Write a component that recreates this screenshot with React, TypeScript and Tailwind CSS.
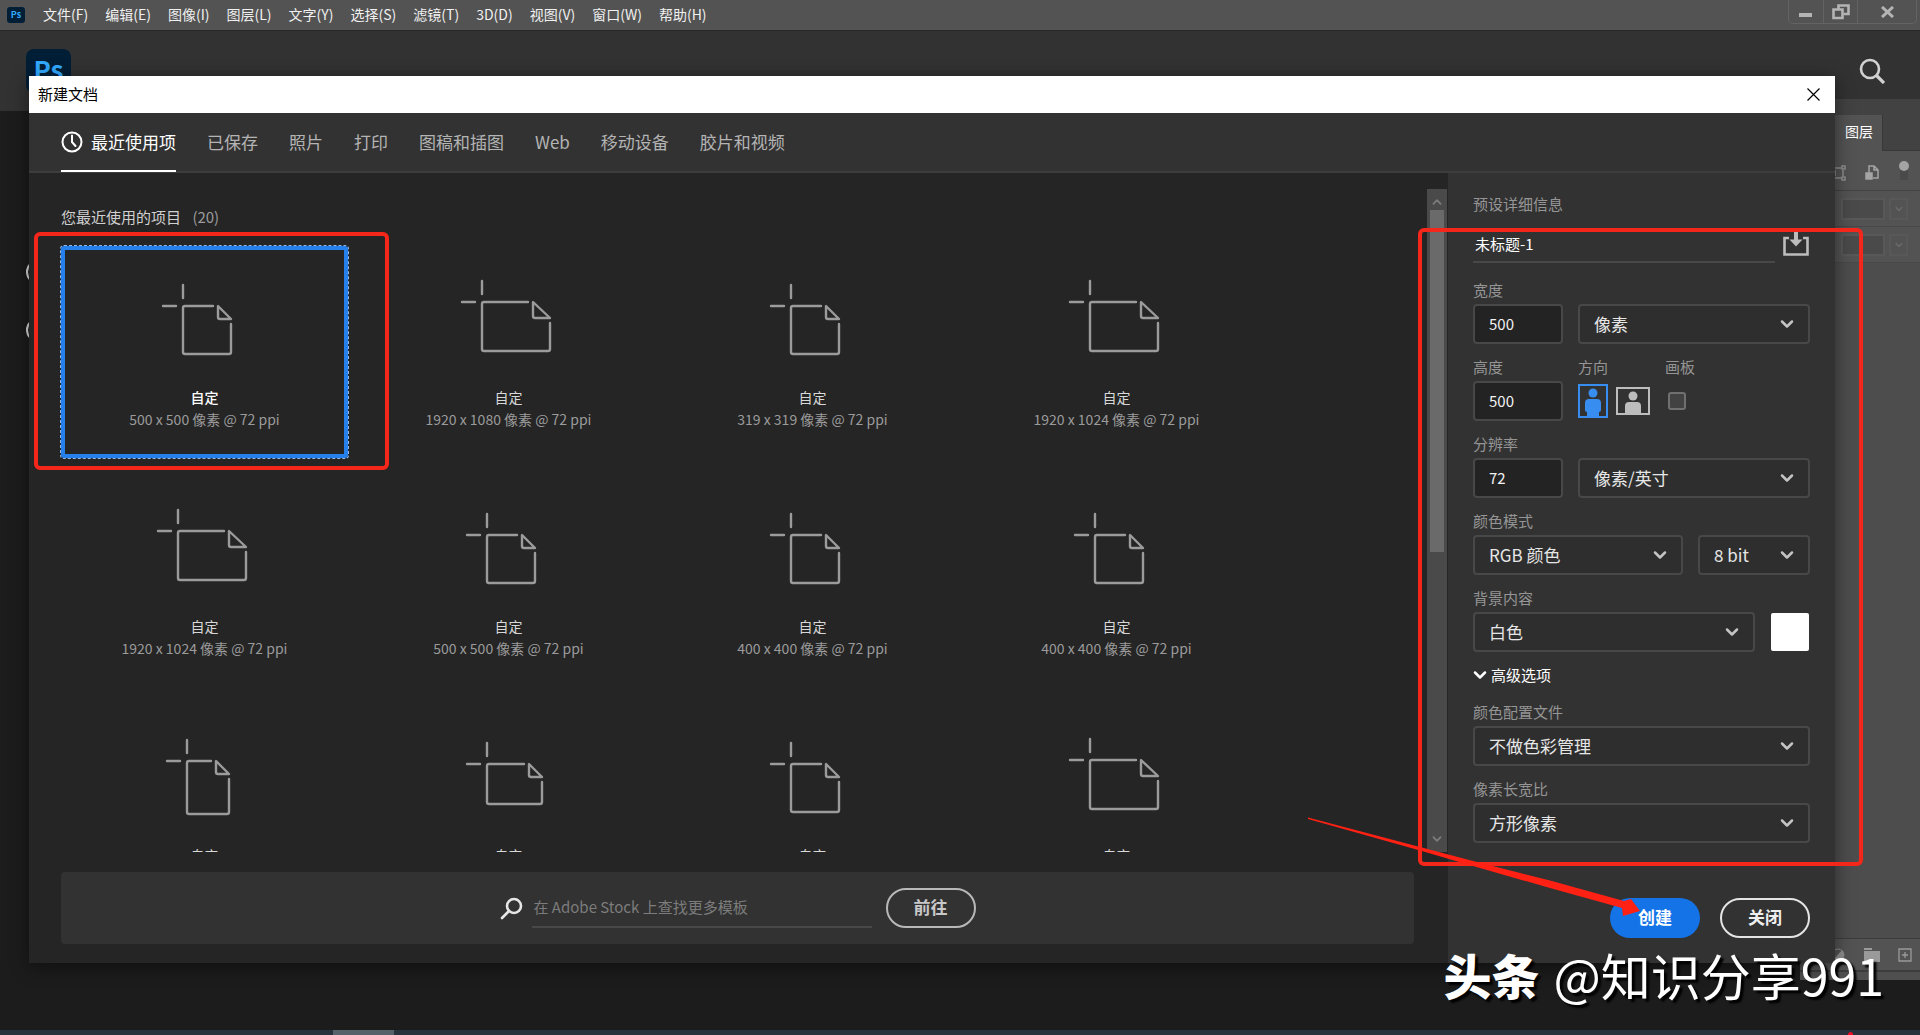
import { useState, ReactNode } from "react";
import clsx from "clsx";

type PresetShape = "square" | "wide" | "tall" | "medium";

interface Preset {
  id: number;
  name: string;
  size: string;
  shape: PresetShape;
}

interface SelectProps {
  id: string;
  label: string;
  value: string;
  className?: string;
}

interface FieldProps {
  label: string;
  htmlFor: string;
  children: ReactNode;
}

const menus = [
  "文件(F)",
  "编辑(E)",
  "图像(I)",
  "图层(L)",
  "文字(Y)",
  "选择(S)",
  "滤镜(T)",
  "3D(D)",
  "视图(V)",
  "窗口(W)",
  "帮助(H)",
];

const tabs = ["最近使用项", "已保存", "照片", "打印", "图稿和插图", "Web", "移动设备", "胶片和视频"];

const presets: Preset[] = [
  { id: 1, name: "自定", size: "500 x 500 像素 @ 72 ppi", shape: "square" },
  { id: 2, name: "自定", size: "1920 x 1080 像素 @ 72 ppi", shape: "wide" },
  { id: 3, name: "自定", size: "319 x 319 像素 @ 72 ppi", shape: "square" },
  { id: 4, name: "自定", size: "1920 x 1024 像素 @ 72 ppi", shape: "wide" },
  { id: 5, name: "自定", size: "1920 x 1024 像素 @ 72 ppi", shape: "wide" },
  { id: 6, name: "自定", size: "500 x 500 像素 @ 72 ppi", shape: "square" },
  { id: 7, name: "自定", size: "400 x 400 像素 @ 72 ppi", shape: "square" },
  { id: 8, name: "自定", size: "400 x 400 像素 @ 72 ppi", shape: "square" },
  { id: 9, name: "自定", size: "", shape: "tall" },
  { id: 10, name: "自定", size: "", shape: "medium" },
  { id: 11, name: "自定", size: "", shape: "square" },
  { id: 12, name: "自定", size: "", shape: "wide" },
];

// page outline and folded corner for each preset shape
const shapes = {
  square: { x: 28, y: 29, w: 48, h: 48, fx: 13, fy: 13 },
  wide: { x: 23, y: 25, w: 68, h: 49, fx: 17, fy: 16 },
  tall: { x: 32, y: 26, w: 42, h: 53, fx: 13, fy: 13 },
  medium: { x: 28, y: 29, w: 55, h: 40, fx: 13, fy: 13 },
};

const DocIcon = ({ shape }: { shape: PresetShape }) => {
  const { x, y, w, h, fx, fy } = shapes[shape];
  const r = x + w;
  const b = y + h;
  return (
    <svg
      width="100"
      height="84"
      viewBox="0 0 100 84"
      fill="none"
      stroke="#9b9b9b"
      strokeWidth="2.4"
      strokeLinecap="round"
      strokeLinejoin="round"
    >
      <path d={`M${x} ${y - 21}V${y - 8}M${x - 20} ${y}H${x - 7}`} />
      <path
        d={`M${r - fx - 5} ${y}H${x + 2}Q${x} ${y} ${x} ${y + 2}V${b - 2}Q${x} ${b} ${x + 2} ${b}H${r - 2}Q${r} ${b} ${r} ${b - 2}V${y + fy + 5}`}
      />
      <path d={`M${r - fx} ${y}V${y + fy - 2}Q${r - fx} ${y + fy} ${r - fx + 2} ${y + fy}H${r}Z`} />
    </svg>
  );
};

const Chevron = ({ className }: { className?: string }) => (
  <svg
    className={className}
    width="14"
    height="10"
    viewBox="0 0 14 10"
    fill="none"
    stroke="currentColor"
    strokeWidth="2.5"
    strokeLinecap="round"
    strokeLinejoin="round"
  >
    <path d="M2 2.5l5 5 5-5" />
  </svg>
);

const Field = ({ label, htmlFor, children }: FieldProps) => (
  <div className="flex flex-col gap-1">
    <label htmlFor={htmlFor} className="text-[15px] leading-5 text-[#959595]">
      {label}
    </label>
    {children}
  </div>
);

const Select = ({ id, label, value, className }: SelectProps) => (
  <div className={clsx("relative", className)}>
    <select
      id={id}
      aria-label={label}
      defaultValue={value}
      className="h-10 w-full appearance-none rounded-[4px] border-2 border-[#484848] bg-[#2e2e2e] pr-10 pl-[14px] text-[17px] text-[#e6e6e6] outline-none"
    >
      <option>{value}</option>
    </select>
    <Chevron className="pointer-events-none absolute top-[15px] right-4 text-[#c4c4c4]" />
  </div>
);

const NumberBox = ({ id, value }: { id: string; value: string }) => (
  <input
    id={id}
    type="text"
    defaultValue={value}
    className="h-10 w-[90px] shrink-0 rounded-[4px] border-2 border-[#484848] bg-[#232323] pb-[2px] pl-[14px] text-[15px] text-[#f2f2f2] outline-none"
  />
);

const MenuBar = () => (
  <header className="flex h-[31px] items-center border-b border-[#282828] bg-[#535353] pl-[7px]">
    <span className="flex h-4 w-[18px] items-center justify-center rounded-[3px] bg-[#001e36] text-[9px] font-bold text-[#31a8ff]">
      Ps
    </span>
    <nav className="ml-[18px] flex gap-[17px] pb-[2px]">
      {menus.map((menu) => (
        <button key={menu} type="button" className="text-sm leading-5 whitespace-nowrap text-[#f0f0f0]">
          {menu}
        </button>
      ))}
    </nav>
    <div className="mr-[3px] ml-auto flex h-6 self-start rounded-b-[5px] border border-t-0 border-[#636363]">
      <button type="button" aria-label="最小化" className="flex w-[35px] items-center justify-center border-r border-[#636363]">
        <svg width="14" height="14" viewBox="0 0 14 14">
          <path d="M0 8h13v4H0z" fill="#b4b4b4" />
        </svg>
      </button>
      <button type="button" aria-label="还原" className="flex w-[34px] items-center justify-center border-r border-[#636363]">
        <svg width="18" height="16" viewBox="0 0 18 16" fill="none" stroke="#b4b4b4" strokeWidth="2.6">
          <path d="M1.5 5.5h9v8.500h-9z" />
          <path d="M6.500 5.500V1.500h10v8.500h-5" />
        </svg>
      </button>
      <button type="button" aria-label="退出" className="flex w-[58px] items-center justify-center">
        <svg width="13" height="12" viewBox="0 0 13 12" stroke="#b4b4b4" strokeWidth="3">
          <path d="M1 1l11 10M12 1L1 11" />
        </svg>
      </button>
    </div>
  </header>
);

const LayersPanel = () => (
  <aside className="flex w-[120px] shrink-0 flex-col bg-[#4d4d4d]">
    <div className="h-4 bg-[#424242]" />
    <div className="flex h-9 bg-[#424242]">
      <div className="flex w-[83px] items-center justify-end border-r border-[#383838] bg-[#535353] pr-[9px] pb-1 text-sm text-white">
        图层
      </div>
      <div className="flex-1 border-b border-[#383838]" />
    </div>
    <div className="flex h-10 items-center justify-end gap-[19px] border-b border-[#424242] bg-[#535353] pr-[10px]">
      <svg className="mt-1" width="14" height="16" viewBox="0 0 14 16" fill="none" stroke="#8e8e8e" strokeWidth="1.5">
        <path d="M2 3h8M2 13h8M11 5v6M3 5v6" />
        <path d="M10 1h3v3h-3zM10 12h3v3h-3z" />
      </svg>
      <svg className="mt-1" width="14" height="16" viewBox="0 0 14 16" fill="none" stroke="#a4a4a4" strokeWidth="1.5">
        <path d="M4 8V1h5l4 4v8H8M9 1v4h4" />
        <path d="M1 8h6v6H1z" fill="#a4a4a4" />
      </svg>
      <svg width="12" height="22" viewBox="0 0 12 22">
        <path d="M2 6h8v14H2z" fill="#4a4a4a" />
        <circle cx="6" cy="6" r="5" fill="#a4a4a4" />
      </svg>
    </div>
    {[0, 1].map((row) => (
      <div key={row} className="flex h-9 items-center justify-end gap-1 border-b border-[#484848] bg-[#535353] pr-3">
        <span className="h-[22px] w-11 border-2 border-[#585858] bg-[#4a4a4a]" />
        <span className="flex h-[22px] w-[19px] items-center justify-center border-2 border-[#585858]">
          <Chevron className="w-2 text-[#6a6a6a]" />
        </span>
      </div>
    ))}
    <div className="mt-auto flex h-8 items-center justify-end gap-[18px] border-t border-[#3c3c3c] bg-[#535353] pr-2">
      <svg width="16" height="16" viewBox="0 0 16 16">
        <circle cx="8" cy="8" r="6" fill="none" stroke="#8e8e8e" />
        <path d="M12 3A6 6 0 0 1 4 12z" fill="#8e8e8e" />
      </svg>
      <svg width="16" height="14" viewBox="0 0 16 14" fill="#9a9a9a">
        <path d="M0 0h8v2H0zM0 3h16v11H0z" />
      </svg>
      <svg width="14" height="14" viewBox="0 0 14 14" fill="none" stroke="#9a9a9a" strokeWidth="1.3">
        <path d="M1 1h12v12H1zM7 4v6M4 7h6" />
      </svg>
    </div>
    <div className="h-[10px] border-t-2 border-[#3c3c3c] bg-[#4f4f4f]" />
  </aside>
);

const PresetDetails = () => (
  <form className="flex w-[387px] shrink-0 flex-col gap-[13px] bg-[#323232] px-[25px] pt-[21px] pb-[25px]">
    <h2 className="text-[15px] leading-5 text-[#959595]">预设详细信息</h2>
    <div className="mb-1 flex items-center justify-between">
      <input
        type="text"
        aria-label="文档名称"
        defaultValue="未标题-1"
        className="h-9 w-[302px] border-b-2 border-[#484848] px-[2px] pb-[2px] text-[15px] text-white outline-none"
      />
      <button type="button" aria-label="存储预设">
        <svg width="28" height="26" viewBox="0 0 28 26" fill="none" stroke="#bdbdbd" strokeWidth="2.6">
          <path d="M7 6H2.500v16.500h23V6H21" />
          <path d="M14 0v9" strokeWidth="4" />
          <path d="M7.500 7.500h13L14 14.500z" fill="#bdbdbd" stroke="none" />
        </svg>
      </button>
    </div>

    <Field label="宽度" htmlFor="width">
      <div className="flex gap-[15px]">
        <NumberBox id="width" value="500" />
        <Select id="unit" label="单位" value="像素" className="flex-1" />
      </div>
    </Field>

    <div className="flex">
      <div className="w-[105px]">
        <Field label="高度" htmlFor="height">
          <NumberBox id="height" value="500" />
        </Field>
      </div>
      <fieldset className="flex w-[87px] flex-col gap-1">
        <legend className="mb-1 text-[15px] leading-5 text-[#959595]">方向</legend>
        <div className="flex h-10 items-center gap-2">
          <label>
            <input type="radio" name="orientation" aria-label="纵向" defaultChecked className="sr-only" />
            <svg width="30" height="34" viewBox="0 0 30 34" fill="#378ef0">
              <path d="M1 1h28v32H1z" fill="none" stroke="#378ef0" strokeWidth="2" />
              <circle cx="15" cy="9" r="4.500" />
              <path d="M11 15h8a4 4 0 0 1 4 4v7a2 2 0 0 1-2 2v5H9v-5a2 2 0 0 1-2-2v-7a4 4 0 0 1 4-4z" />
            </svg>
          </label>
          <label>
            <input type="radio" name="orientation" aria-label="横向" className="sr-only" />
            <svg width="34" height="28" viewBox="0 0 34 28" fill="#bdbdbd">
              <path d="M1 1h32v26H1z" fill="none" stroke="#bdbdbd" strokeWidth="2" />
              <circle cx="17" cy="9" r="4.500" />
              <path d="M13 15h8a4 4 0 0 1 4 4v8H9v-8a4 4 0 0 1 4-4z" />
            </svg>
          </label>
        </div>
      </fieldset>
      <Field label="画板" htmlFor="artboard">
        <div className="flex h-10 items-center pl-[3px]">
          <input
            id="artboard"
            type="checkbox"
            className="h-[18px] w-[18px] appearance-none rounded-[3px] border-2 border-[#707070] bg-[#424242]"
          />
        </div>
      </Field>
    </div>

    <Field label="分辨率" htmlFor="resolution">
      <div className="flex gap-[15px]">
        <NumberBox id="resolution" value="72" />
        <Select id="resolution-unit" label="分辨率单位" value="像素/英寸" className="flex-1" />
      </div>
    </Field>

    <Field label="颜色模式" htmlFor="mode">
      <div className="flex gap-[15px]">
        <Select id="mode" label="颜色模式" value="RGB 颜色" className="flex-1" />
        <Select id="depth" label="位深度" value="8 bit" className="w-[112px]" />
      </div>
    </Field>

    <Field label="背景内容" htmlFor="background">
      <div className="flex items-center gap-[15px]">
        <Select id="background" label="背景内容" value="白色" className="flex-1" />
        <button
          type="button"
          aria-label="背景颜色"
          className="h-10 w-10 rounded-[3px] border border-transparent bg-white bg-clip-padding"
        />
      </div>
    </Field>

    <button type="button" className="mb-1 flex items-center gap-1 text-[15px] leading-5 text-white">
      <Chevron />
      高级选项
    </button>

    <Field label="颜色配置文件" htmlFor="profile">
      <Select id="profile" label="颜色配置文件" value="不做色彩管理" />
    </Field>

    <Field label="像素长宽比" htmlFor="aspect">
      <Select id="aspect" label="像素长宽比" value="方形像素" />
    </Field>

    <div className="mt-auto flex justify-end gap-5">
      <button type="button" className="h-10 w-[90px] rounded-full bg-[#1473e6] pb-[2px] text-[17px] font-bold text-white">
        创建
      </button>
      <button type="button" className="h-10 w-[90px] rounded-full border-2 border-[#e4e4e4] pb-[2px] text-[17px] font-bold text-[#eeeeee]">
        关闭
      </button>
    </div>
  </form>
);

const NewDocumentDialog = () => {
  const [activeTab, setActiveTab] = useState<string>("最近使用项");
  const [selected, setSelected] = useState<number>(1);

  return (
    <div
      role="dialog"
      aria-label="新建文档"
      className="absolute top-[76px] right-[85px] bottom-[72px] left-[29px] flex flex-col bg-[#252525] shadow-[0_4px_18px_rgba(0,0,0,0.45)]"
    >
      <div className="flex h-[37px] shrink-0 items-center justify-between bg-white pr-[15px] pl-[9px]">
        <h1 className="text-[15px] text-black">新建文档</h1>
        <button type="button" aria-label="关闭窗口">
          <svg width="13" height="13" viewBox="0 0 13 13" stroke="#000" strokeWidth="1.2">
            <path d="M.5.5l12 12M12.500.5l-12 12" />
          </svg>
        </button>
      </div>

      <nav className="flex h-[60px] shrink-0 gap-[31px] border-b-2 border-[#3d3d3d] bg-[#323232] pl-8">
        {tabs.map((tab) => (
          <button
            key={tab}
            type="button"
            onClick={() => setActiveTab(tab)}
            className={clsx(
              "flex h-[59px] items-center gap-2 border-b-2 text-[17px] whitespace-nowrap",
              activeTab === tab ? "border-white text-white" : "border-transparent text-[#b4b4b4]"
            )}
          >
            {tab === "最近使用项" && (
              <svg width="22" height="22" viewBox="0 0 22 22" fill="none" stroke="currentColor" strokeWidth="2">
                <circle cx="11" cy="11" r="9.500" />
                <path d="M11 4.500V11l3.500 4" strokeLinecap="round" />
              </svg>
            )}
            {tab}
          </button>
        ))}
      </nav>

      <div className="flex min-h-0 flex-1">
        <div className="flex min-w-0 flex-1 flex-col pt-4">
          <div className="flex min-h-0 flex-1">
            <div className="flex-1 overflow-hidden pt-4 pl-8">
              <h2 className="text-[15px] leading-6 text-[#d0d0d0]">
                您最近使用的项目 <span className="ml-2 text-[#9b9b9b]">(20)</span>
              </h2>
              <div className="mt-[17px] grid grid-cols-[repeat(auto-fill,287px)] gap-[17px]">
                {presets.map((preset) => (
                  <button
                    key={preset.id}
                    type="button"
                    onClick={() => setSelected(preset.id)}
                    className={clsx(
                      "flex h-[212px] flex-col items-center rounded-[3px] border-4 pt-[27px]",
                      selected === preset.id
                        ? "border-[#2680eb] outline-1 outline-[#8fb8e8] outline-dashed"
                        : "border-transparent"
                    )}
                  >
                    <DocIcon shape={preset.shape} />
                    <span
                      className={clsx(
                        "mt-6 text-sm leading-6",
                        selected === preset.id ? "font-medium text-white" : "text-[#d8d8d8]"
                      )}
                    >
                      {preset.name}
                    </span>
                    <span className="text-sm leading-5 text-[#9b9b9b]">{preset.size}</span>
                  </button>
                ))}
              </div>
            </div>
            <div className="flex w-5 flex-col items-center bg-[#4a4a4a]">
              <Chevron className="mt-2 w-[10px] shrink-0 rotate-180 text-[#7c7c7c]" />
              <span className="mt-[3px] h-[342px] w-[14px] bg-[#6a6a6a]" />
              <Chevron className="mt-auto mb-2 w-[10px] shrink-0 text-[#7c7c7c]" />
            </div>
            <div className="w-px bg-[#252525]" />
          </div>

          <div className="mt-5 mr-[34px] mb-[19px] ml-8 flex h-[72px] shrink-0 items-center justify-center rounded-[4px] bg-[#323232]">
            <svg width="23" height="23" viewBox="0 0 23 23" fill="none" stroke="#e6e6e6" strokeWidth="2.6" strokeLinecap="round">
              <circle cx="14" cy="9" r="7" />
              <path d="M9 14l-7 7" />
            </svg>
            <input
              type="text"
              aria-label="查找模板"
              placeholder="在 Adobe Stock 上查找更多模板"
              className="mr-[14px] ml-[9px] h-10 w-[340px] border-b-2 border-[#484848] px-[2px] pb-[2px] text-[15px] text-[#d0d0d0] outline-none placeholder:text-[#7c7c7c]"
            />
            <button type="button" className="h-10 w-[90px] rounded-full border-2 border-[#b8b8b8] pb-[2px] text-[17px] font-bold text-[#c8c8c8]">
              前往
            </button>
          </div>
        </div>
        <PresetDetails />
      </div>
    </div>
  );
};

// red tutorial marks and the author's signature drawn over the window
const Annotations = () => (
  <div className="pointer-events-none">
    <div className="absolute top-[232px] left-[34px] h-[238px] w-[355px] rounded-[6px] border-4 border-[#f5261a]" />
    <div className="absolute top-[228px] right-[57px] h-[638px] w-[445px] rounded-[6px] border-4 border-[#f5261a]" />
    <svg className="absolute right-[270px] bottom-[110px]" width="350" height="110" viewBox="0 0 350 110" fill="#ff2114">
      <path d="M8 2.500L120 32L173 46L250 65.500L324 86L331 84L340 96L323 101L322 93L250 73L173 51L120 35.500L8 4z" />
    </svg>
    <p className="absolute right-[36px] bottom-[25px] flex items-center gap-[14px] leading-[72px] whitespace-nowrap text-white [text-shadow:3px_3px_2px_#000]">
      <span className="text-[48px] font-black">头条</span>
      <span className="text-[50px]">@知识分享991</span>
    </p>
  </div>
);

const App = () => {
  return (
    <div className="relative flex min-h-screen flex-col overflow-hidden bg-[#1c1c1c] font-['Noto_Sans_CJK_SC',sans-serif]">
      <MenuBar />
      <div className="flex h-[68px] items-start justify-between bg-[#323232] pt-[18px] pr-[35px] pl-[26px]">
        <span className="flex h-[44px] w-[45px] items-center justify-center rounded-[8px] bg-[#001e36] pb-1 text-[26px] leading-6 font-bold text-[#31a8ff]">
          Ps
        </span>
        <button type="button" aria-label="搜索" className="pt-[9px]">
          <svg width="26" height="26" viewBox="0 0 26 26" fill="none" stroke="#d2d2d2" strokeWidth="2.6">
            <circle cx="11" cy="11" r="9" />
            <path d="M17.500 17.500L25 25" strokeWidth="3.200" />
          </svg>
        </button>
      </div>
      <div className="flex flex-1">
        <main className="flex-1">
          <div className="h-3 bg-[#323232]" />
          <div className="mt-[149px] ml-[26px] h-6 w-[120px] rounded-full border-2 border-[#d8d8d8]" />
          <div className="mt-[34px] ml-[26px] h-6 w-[120px] rounded-full border-2 border-[#d8d8d8]" />
        </main>
        <LayersPanel />
      </div>
      <div className="h-[50px]" />
      <footer className="flex h-[5px] justify-between bg-[#26333d] pr-[67px] pl-[333px]">
        <div className="h-full w-[61px] bg-[#56626a]" />
        <div className="mt-[2px] h-[3px] w-[5px] rounded-t-full bg-[#e81123]" />
      </footer>
      <NewDocumentDialog />
      <Annotations />
    </div>
  );
};

export default App;
